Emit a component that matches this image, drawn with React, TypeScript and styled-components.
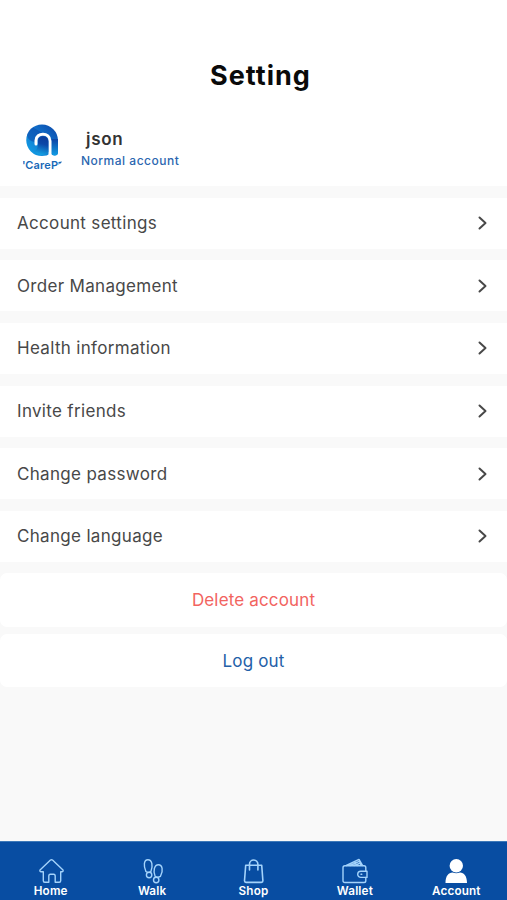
import React from 'react';
import styled, { createGlobalStyle } from 'styled-components';

const Global = createGlobalStyle`
  * { box-sizing: border-box; }
  body { margin: 0; background: #f9f9f9; font-family: Inter, "Liberation Sans", sans-serif; }
`;

const Screen = styled.div`
  display: flex;
  flex-direction: column;
  width: 507px;
  height: 900px;
  overflow: hidden;
  background: #f9f9f9;
`;

const Header = styled.header`
  height: 185.7px;
  flex: none;
  background: #fff;
  padding-top: 59px;
`;

const Title = styled.h1`
  margin: 0;
  text-align: center;
  font-size: 27px;
  line-height: 34px;
  font-weight: 700;
  letter-spacing: 1px;
  text-indent: 14px;
  color: #0a0a0a;
`;

const Profile = styled.div`
  display: flex;
  padding: 30px 0 0 22px;
`;

const Avatar = styled.svg`
  width: 42px;
  height: 50px;
  flex: none;
`;

const Identity = styled.div`
  display: flex;
  flex-direction: column;
  padding: 5px 0 0 17px;
`;

const UserName = styled.div`
  padding-left: 5px;
  font-size: 17px;
  line-height: 22px;
  font-weight: 600;
  letter-spacing: 0.7px;
  color: #333;
`;

const AccountType = styled.div`
  font-size: 12px;
  line-height: 16px;
  margin-top: 3px;
  font-weight: 500;
  letter-spacing: 0.5px;
  color: #2b66b0;
`;

const Menu = styled.nav`
  display: flex;
  flex-direction: column;
  gap: 11.65px;
  padding: 12px 0 11.5px;
`;

const MenuRow = styled.div`
  display: flex;
  align-items: center;
  justify-content: space-between;
  height: 51px;
  padding: 0 18px 0 17px;
  background: #fff;
  font-size: 17px;
  letter-spacing: 0.32px;
  color: #484848;
`;

const Chevron = styled.svg`
  width: 13px;
  height: 16px;
  fill: none;
  stroke: #484848;
  stroke-width: 2;
  stroke-linecap: round;
  stroke-linejoin: round;
`;

const Actions = styled.div`
  display: flex;
  flex-direction: column;
  gap: 7.5px;
`;

const Action = styled.div<{ $color: string; $height: number }>`
  display: flex;
  align-items: center;
  justify-content: center;
  height: ${p => p.$height}px;
  border-radius: 7px;
  background: #fff;
  font-size: 17px;
  letter-spacing: 0.15px;
  color: ${p => p.$color};
`;

const TabBar = styled.nav`
  display: grid;
  grid-template-columns: repeat(5, 1fr);
  flex: none;
  height: 59px;
  margin-top: auto;
  background: #084da2;
  border-top: 1px solid #3d79b9;
`;

const Tab = styled.div`
  display: flex;
  flex-direction: column;
  align-items: center;
  padding-top: 15px;
  color: #fff;
  font-size: 11.7px;
  line-height: 14px;
  font-weight: 600;
  letter-spacing: 0.15px;
`;

const TabIcon = styled.svg`
  width: 28px;
  height: 28px;
  flex: none;
  fill: none;
  stroke: #a4d3fb;
  stroke-width: 1.4;
  stroke-linecap: round;
  stroke-linejoin: round;
`;

const TabLabel = styled.span`
  margin-top: -1px;
`;

const rows = ['Account settings', 'Order Management', 'Health information', 'Invite friends', 'Change password', 'Change language'];

const tabs = [
  { label: 'Home', icon: <path transform="translate(.5 0)" d="M2.5 13 13 3.100q1-.9 2 0L25.500 13q.5 1.700-.8 1.700h-1.500v9q0 1.500-1.500 1.500h-4v-6q0-2-1.500-2h-3.400q-1.500 0-1.500 2v6h-4q-1.500 0-1.500-1.500v-9H3.300Q2 14.700 2.500 13Z" /> },
  { label: 'Walk', icon: <g transform="translate(.9 0)">
    <path d="M7 14.500C4.500 9 4.800 2.700 9 2.700s5.300 6 3 11.800Q9.500 16.300 7 14.500Z" /><circle cx="10.200" cy="18" r="2.700" />
    <path d="M16.200 19.300C13.800 14 15.600 7.800 19.500 7.800s5.300 5.800 2 11.500Q18.500 21 16.200 19.300Z" /><circle cx="17.300" cy="23" r="2.700" />
  </g> },
  { label: 'Shop', icon: <g strokeWidth="1.600" transform="translate(.7 0)"><path d="M6 8.300h16l1.200 15.500q0 1.600-1.500 1.600H6.300q-1.500 0-1.500-1.600L6 8.300Z" /><path d="M9.800 13V7.200a4.200 4.200 0 0 1 8.400 0V13" /></g> },
  { label: 'Wallet', icon: <g>
    <path d="M4 8.700h19q1.800 0 1.800 1.800v3.600M24.800 20.500v3.200q0 1.800-1.800 1.800H4q-2 0-2-2V10.700q0-2 2-2" />
    <path d="M26 14.200h-6.200a3.100 3.100 0 0 0 0 6.200H26ZM20 17.300h.8M5.300 8.500 18 2.400l3.500 6M9 8.500l9.700-4.400M13 8.500l6.800-2.500M18 2.400l2 6M13.500 4.700l2.700 3.800" />
  </g> },
  { label: 'Account', icon: <g fill="#fff" stroke="none"><circle cx="14.300" cy="8.700" r="6.700" /><path d="M3.500 26c0-7 3-10.500 7-10.500q3.800 1.400 7.500 0c4 0 7 3.500 7 10.500Z" /></g> },
];

export default function App() {
  return (
    <>
      <Global />
      <Screen>
        <Header>
          <Title>Setting</Title>
          <Profile>
            <Avatar viewBox="0 0 42 50">
              <defs>
                <linearGradient id="ring" x1="0" y1="1" x2="1" y2="0">
                  <stop offset="0" stopColor="#12a5e8" />
                  <stop offset=".5" stopColor="#1177d0" />
                  <stop offset="1" stopColor="#0c43a5" />
                </linearGradient>
                <linearGradient id="arm" x1="0" y1="0" x2="0" y2="1">
                  <stop offset="0" stopColor="#0c43a5" />
                  <stop offset="1" stopColor="#119ee5" />
                </linearGradient>
                <linearGradient id="core" x1=".6" y1="0" x2=".4" y2="1">
                  <stop offset="0" stopColor="#0b3c99" />
                  <stop offset=".4" stopColor="#0c48a8" />
                  <stop offset="1" stopColor="#14a5e6" />
                </linearGradient>
                <clipPath id="caption"><rect x="1" y="36" width="39" height="13" /></clipPath>
              </defs>
              <path d="M20 1.500A16 16 0 0 1 36 17.500V29q0 3.500-3.500 3.500-2.500 0-4-2Q25 33 20 33A15.750 15.750 0 0 1 20 1.500Z" fill="url(#ring)" />
              <path d="M5 12Q7 6 11 4.500L24 12 13 19Q6 18 5 12Z" fill="#0c43a5" opacity=".5" />
              <path d="M29.500 16H36v13q0 3.500-3.250 3.500T29.500 29Z" fill="url(#arm)" />
              <path d="M14 21v-3.500c0-8.500 14-8.500 14 .5V33" fill="none" stroke="#fff" strokeWidth="3" strokeLinecap="round" />
              <path d="M16 18.500a5.200 5.200 0 0 1 10.400 0V29q-2 3-6 3-5 0-8-4 4-1 3.600-9.500Z" fill="url(#core)" />
              <g clipPath="url(#caption)" fill="#1768b7" fontFamily="Inter, sans-serif" fontSize="11" fontWeight="600">
                <text x="0" y="46" fontSize="11">'</text>
                <text x="3.200" y="46" textLength="33">CareP</text>
                <path d="m36.500 39 3.500-.5-1.300 2-1-.2-1 1.600Z" />
              </g>
            </Avatar>
            <Identity>
              <UserName>json</UserName>
              <AccountType>Normal account</AccountType>
            </Identity>
          </Profile>
        </Header>
        <Menu>
          {rows.map(label => (
            <MenuRow key={label}>
              {label}
              <Chevron viewBox="0 0 13 16"><path d="m3.500 2.500 6 5.500-6 5.500" /></Chevron>
            </MenuRow>
          ))}
        </Menu>
        <Actions>
          <Action $color="#f2645f" $height={53.5}>Delete account</Action>
          <Action $color="#2460a8" $height={52.5}>Log out</Action>
        </Actions>
        <TabBar>
          {tabs.map(tab => (
            <Tab key={tab.label}>
              <TabIcon viewBox="0 0 28 28">{tab.icon}</TabIcon>
              <TabLabel>{tab.label}</TabLabel>
            </Tab>
          ))}
        </TabBar>
      </Screen>
    </>
  );
}
